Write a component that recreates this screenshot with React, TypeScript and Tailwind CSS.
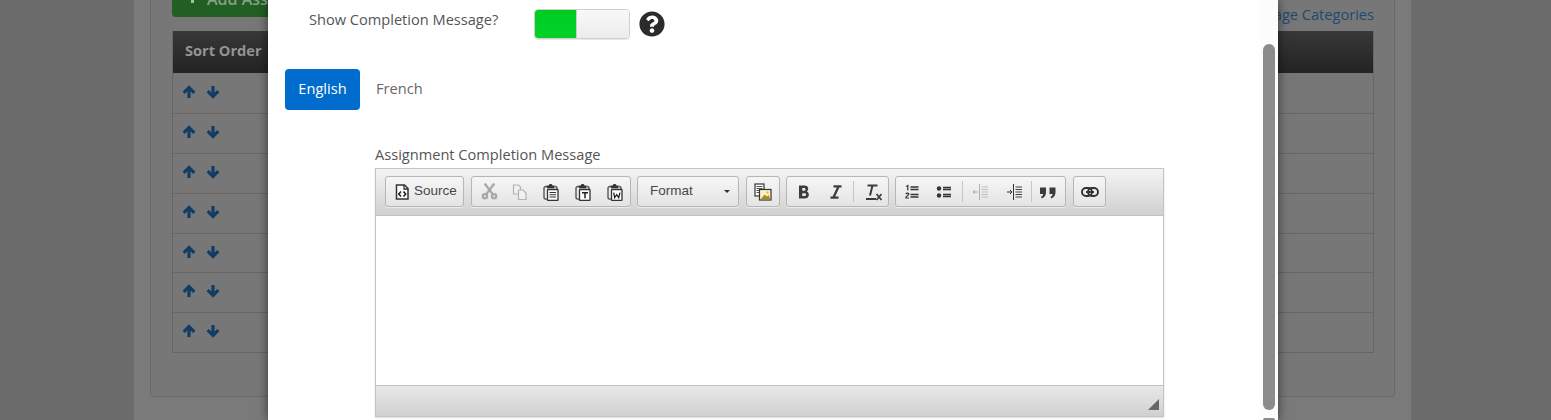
import React from "react";
import { FaQuestionCircle } from "react-icons/fa";

const Ic = ({ children, className = "" }: { children: React.ReactNode; className?: string }) => (
  <svg viewBox="0 0 16 16" width="16" height="16" className={className} fill="none">{children}</svg>
);

const Clip = ({ inner }: { inner: React.ReactNode }) => (
  <svg viewBox="0 0 16 18" width="16" height="18" fill="none">
    <path d="M4 3.500H2.800C1.800 3.500 1 4.300 1 5.300v9c0 1 .8 1.800 1.800 1.800H4" stroke="#555" strokeWidth="1.400" />
    <path d="M3.800 2.500h2C6.200.6 9 .6 9.400 2.500h2v2.800H3.800z" fill="#333" />
    <path d="M11.500 3.500h.7c1 0 1.800.8 1.800 1.800V6" stroke="#555" strokeWidth="1.400" />
    <rect x="4.500" y="6.500" width="10.500" height="11" rx=".8" fill="#fff" stroke="#333" strokeWidth="1.300" />
    {inner}
  </svg>
);

const Btn = ({ children, w = "w-[32px]" }: { children: React.ReactNode; w?: string }) => (
  <div className={`${w} h-full flex items-center justify-center shrink-0`}>{children}</div>
);
const Sep = ({ className = "mx-px" }: { className?: string }) => <div className={`w-px h-[21px] bg-[#c6c6c6] shrink-0 ${className}`} />;
const Group = ({ children, className = "" }: { children: React.ReactNode; className?: string }) => (
  <div className={`h-[31px] flex items-center rounded-[3px] border border-[#b6b6b6] bg-gradient-to-b from-[#f6f6f6] to-[#e4e4e4] shadow-[0_1px_0_rgba(255,255,255,0.5)] ${className}`}>
    {children}
  </div>
);

const Toolbar = () => (
  <div className="h-[47px] border-b border-[#c4c4c4] bg-gradient-to-b from-[#f4f4f4] to-[#cfd1cf] pl-[9px] pt-[7px] flex gap-[6px] font-['Liberation_Sans',sans-serif] text-[13.500px] text-[#484848]">
    <Group className="w-[79px] mr-px pl-[8px] gap-[4px]">
      <Ic>
        <path d="M2.500 1h8l3.500 3.500V15h-11.500z" fill="#fff" stroke="#333" strokeWidth="1.500" />
        <path d="M10 1v4h4" stroke="#333" strokeWidth="1.300" />
        <path d="M7 7.500 4.800 10 7 12.500M9.500 7.500l2.200 2.500-2.200 2.500" stroke="#222" strokeWidth="1.600" />
      </Ic>
      <span>Source</span>
    </Group>
    <Group className="w-[160px] pl-[2px]">
      <Btn w="w-[31px]">
        <svg viewBox="0 0 16 16" width="17" height="17" fill="none">
          <g stroke="#a8a8a8" strokeWidth="2.200">
            <path d="M3.500 0.500 11 10.500M12.500 0.500 5 10.500" />
            <circle cx="3.700" cy="12.500" r="2" />
            <circle cx="12.300" cy="12.500" r="2" />
          </g>
        </svg>
      </Btn>
      <Btn w="w-[29px]">
        <Ic>
          <g stroke="#b4b4b4" strokeWidth="1.200" fill="#f1f1f1">
            <path d="M1.500 1h5l2 2v7h-7z" />
            <path d="M6.500 6H11l3 3v6.500H6.500z" />
          </g>
        </Ic>
      </Btn>
      <Btn w="w-[33px]"><Clip inner={<path d="M6.500 9.500h6.500M6.500 11.700h6.500M6.500 14h6.500" stroke="#333" strokeWidth="1.100" />} /></Btn>
      <Btn w="w-[32px]"><Clip inner={<path d="M7 9.700h6M10 9.700v5.500" stroke="#222" strokeWidth="1.500" />} /></Btn>
      <Btn w="w-[32px]"><Clip inner={<path d="M6.700 9.700l1 5 2-3 2 3 1.300-5" stroke="#222" strokeWidth="1.300" />} /></Btn>
    </Group>
    <Group className="w-[102px] mr-px pl-[12px] relative">
      <span>Format</span>
      <span className="absolute right-[8px] top-[13px] w-0 h-0 border-x-[3px] border-x-transparent border-t-[3px] border-t-[#333]" />
    </Group>
    <Group className="w-[34px] justify-center">
      <svg viewBox="0 0 18 18" width="18" height="18" fill="none">
        <rect x="1" y="1" width="9" height="12" fill="#fff" stroke="#333" strokeWidth="1.200" />
        <path d="M2.500 3.500h6M2.500 5.500h6M2.500 7.500h3M2.500 9.500h3" stroke="#555" />
        <rect x="5.500" y="6.500" width="11.500" height="10.500" fill="#fbf3c8" stroke="#333" strokeWidth="1.200" />
        <path d="M6.500 16.500l4-5 2.500 2 1.500-1.500 2 4.500z" fill="#a98a2c" />
        <circle cx="13.500" cy="9.500" r="1.200" fill="#ebc04a" />
      </svg>
    </Group>
    <Group className="w-[103px] pl-[1px]">
      <Btn>
        <Ic>
          <path fillRule="evenodd" clipRule="evenodd" d="M3 1.500h5.800c3.700 0 4.600 4.400 1.900 5.900 3.300 1 3 7.100-1.900 7.100H3zM6.300 4v2.800h2c1.600 0 1.600-2.800 0-2.800zM6.300 9.200V12h2.400c1.800 0 1.800-2.800 0-2.800z" fill="#3c3c3c" />
        </Ic>
      </Btn>
      <Btn>
        <Ic><path d="M5.500 2.300h8M2.500 13.700h8M10.700 2.300l-5.400 11.400" stroke="#3c3c3c" strokeWidth="2.300" /></Ic>
      </Btn>
      <Sep />
      <Btn w="w-[36px]">
        <svg viewBox="0 0 18 18" width="18" height="18" fill="none" className="ml-[2px]">
          <path d="M2.500 2.500h10M7.500 2.500l-2.500 10M1 16h10" stroke="#3c3c3c" strokeWidth="2" />
          <path d="M11.500 11l5 6M16.500 11l-5 6" stroke="#3c3c3c" strokeWidth="1.700" />
        </svg>
      </Btn>
    </Group>
    <Group className="w-[171px] mr-px">
      <Btn>
        <Ic>
          <path d="M6.500 3h8M6.500 5.500h8M6.500 10.500h8M6.500 13h8" stroke="#333" strokeWidth="1.500" />
          <path d="M2.200 2.500 3.800 1.500v5" stroke="#333" strokeWidth="1.200" />
          <path d="M1.800 10c.5-1.200 3-1.200 3 0s-3 2-3 4h3.200" stroke="#333" strokeWidth="1.200" />
        </Ic>
      </Btn>
      <Btn>
        <Ic>
          <circle cx="3" cy="4.500" r="2.200" fill="#333" /><circle cx="3" cy="11.500" r="2.200" fill="#333" />
          <path d="M7 3.500h8M7 5.500h8M7 10.500h8M7 12.500h8" stroke="#333" strokeWidth="1.400" />
        </Ic>
      </Btn>
      <Sep className="ml-[2px]" />
      <Btn w="w-[36px]">
        <Ic>
          <path d="M6.500 0v16" stroke="#b0b0b0" />
          <path d="M8.500 3h6.500M8.500 5.500h6.500M8.500 8h6.500M8.500 10.500h6.500M8.500 13h6.500" stroke="#c0c0c0" />
          <path d="M5 8H0M2 6 .2 8 2 10" stroke="#aaa" />
        </Ic>
      </Btn>
      <Btn w="w-[32px]">
        <Ic>
          <path d="M6.500 0v16" stroke="#333" />
          <path d="M8.500 3h6.500M8.500 5.500h6.500M8.500 8h6.500M8.500 10.500h6.500M8.500 13h6.500" stroke="#444" />
          <path d="M0 8h5M3 6l2 2-2 2" stroke="#333" />
        </Ic>
      </Btn>
      <Sep className="" />
      <Btn w="w-[32px]">
        <svg viewBox="0 0 18 16" width="18" height="16" fill="none">
          <path d="M1 3.500h6v4.800C7 11.500 5.300 13.500 2.800 14.500L2 12.800c1.300-.6 2-1.400 2.200-2.800H1zM10.500 3.500h6v4.800c0 3.200-1.700 5.200-4.200 6.200l-.8-1.700c1.300-.6 2-1.400 2.200-2.800h-3.200z" fill="#3a3a3a" />
        </svg>
      </Btn>
    </Group>
    <Group className="w-[33px] justify-center">
      <svg viewBox="0 0 18 12" width="18" height="12" fill="none">
        <rect x="1" y="2" width="10" height="8" rx="4" stroke="#333" strokeWidth="1.900" />
        <rect x="7" y="2" width="10" height="8" rx="4" stroke="#333" strokeWidth="1.900" />
        <path d="M5 6h8" stroke="#333" strokeWidth="1.900" />
      </svg>
    </Group>
  </div>
);

const Arrow = ({ down = false }: { down?: boolean }) => (
  <svg viewBox="0 0 14 14" width="14" height="14" fill="none" className={down ? "rotate-180" : ""}>
    <path d="M7 13V3M1.700 7.800 7 2.500l5.300 5.300" stroke="#123c62" strokeWidth="3.200" />
  </svg>
);

const Row = ({ className }: { className: string }) => (
  <div className={`border-b border-[#666] pl-[9px] flex gap-[10px] ${className}`}>
    <Arrow /><Arrow down />
  </div>
);

export default function App() {
  return (
    <div className="relative h-[420px] overflow-hidden bg-[#6b6b6b] font-['Open_Sans',sans-serif] text-[14.600px]">
      {/* Dimmed page */}
      <div className="ml-[133px] mr-[139px] h-full border-x border-[#6f6f6f] bg-[#7a7a7a] px-[16px]">
        <div className="h-[397px] rounded-b-[4px] border-x border-b border-[#696969] bg-[#777] px-[21px]">
          <div className="h-[31px] flex justify-between items-start">
            <div className="h-[17px] w-[200px] overflow-hidden rounded-b-[4px] bg-[#215f23] pl-[19px] relative text-[#86a086] text-[16px] leading-[22px] font-semibold">
              <div className="absolute left-[19px] top-0 w-[3px] h-[3px] bg-[#a8bda8]" />
              <span className="absolute left-[35px] bottom-[7px] whitespace-nowrap">Add Assignment</span>
            </div>
            <span className="leading-[19px] mt-[5px] text-[#1d4a72] mr-[-1px]">Manage Categories</span>
          </div>
          <div className="border-x border-[#666] h-[322px] mr-[-1px]">
            <div className="h-[42px] pb-[2px] bg-gradient-to-b from-[#383838] to-[#232323] pl-[12px] flex items-center font-bold text-[#949494]">
              Sort Order
            </div>
            <Row className="h-[41px] pt-[12px]" />
            <Row className="h-[40px] pt-[11px]" />
            <Row className="h-[40px] pt-[11px]" />
            <Row className="h-[40px] pt-[11px]" />
            <Row className="h-[39px] pt-[11px]" />
            <Row className="h-[40px] pt-[11px]" />
            <Row className="h-[40px] pt-[11px]" />
          </div>
        </div>
      </div>

      {/* Modal */}
      <div className="absolute left-[268px] top-0 w-[1010px] h-[420px] bg-white shadow-[0_0_10px_rgba(0,0,0,0.55)] overflow-hidden text-[#555]">
        <div className="pt-[9px] pl-[41px] h-[69px] flex">
          <span className="w-[225px] leading-[24px] -mt-[2px] h-[24px]">Show Completion Message?</span>
          <div className="w-[96px] h-[30px] flex rounded-[4px] border border-[#d0d0d0] overflow-hidden shadow-[0_1px_1px_rgba(0,0,0,0.1)]">
            <div className="w-[41px] bg-gradient-to-b from-[#00cc1f] to-[#00d12a]" />
            <div className="flex-1 bg-gradient-to-b from-[#f8f8f8] to-[#ececec] border-l border-[#ccc]" />
          </div>
          <FaQuestionCircle className="ml-[9px] mt-[2px] text-[26px] text-[#2b2b2b]" />
        </div>
        <div className="pl-[17px] flex items-center h-[41px]">
          <div className="w-[75px] h-[41px] rounded-[4px] bg-[#006ccd] text-white flex items-center justify-center pb-px">English</div>
          <div className="ml-[16px] text-[#666] pb-px">French</div>
        </div>
        <div className="pl-[107px] pt-[35px] w-[896px]">
          <div className="leading-[19px] h-[23px]">Assignment Completion Message</div>
          <div className="border border-[#c4c4c4] shadow-[0_1px_2px_rgba(0,0,0,0.15)] h-[249px] flex flex-col">
            <Toolbar />
            <div className="h-[170px] bg-white border-b border-[#c4c4c4]" />
            <div className="flex-1 bg-gradient-to-b from-[#e8e8e8] to-[#cfd1cf] relative">
              <span className="absolute right-[4px] bottom-[6px] w-0 h-0 border-l-[11px] border-l-transparent border-b-[11px] border-b-[#666]" />
            </div>
          </div>
        </div>
        {/* Scrollbar */}
        <div className="absolute left-[992px] top-0 w-[18px] h-full bg-[#fcfcfc]" />
        <div className="absolute left-[995px] top-[44px] w-[12px] h-[366px] rounded-full bg-[#8c8c8c]" />
        <div className="absolute left-[995px] top-[418px] w-[12px] h-[4px] rounded-t-[2px] bg-[#8c8c8c]" />
      </div>
    </div>
  );
}
